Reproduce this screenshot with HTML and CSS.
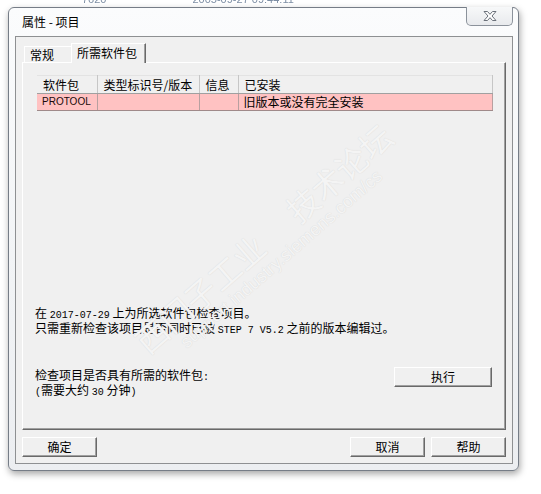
FILE: index.html
```html
<!DOCTYPE html>
<html>
<head>
<meta charset="utf-8">
<link rel="stylesheet" href="styles.css">
</head>
<body>
<div class="bgrow"><div class="bgline"><span class="bg1">7620</span><span class="bg2">2005-09-27 09:44:11</span></div></div>
<div class="window">
  <div class="titlebar">
    <span class="title">属性 - 项目</span>
    <div class="close">
      <svg width="18" height="12" viewBox="0 0 18 12">
        <path d="M3 1.5 H6.5 L9 4.3 L11.5 1.5 H15 L11 6 L15 10.5 H11.5 L9 7.7 L6.5 10.5 H3 L7 6 Z" fill="#ffffff" stroke="#6b717a" stroke-width="1" stroke-linejoin="round"/>
      </svg>
    </div>
  </div>
  <div class="client">
    <div class="tabs">
      <div class="tab">常规</div>
      <div class="tab active">所需软件包</div>
    </div>
    <div class="panel">
      <table class="grid">
        <colgroup><col class="c1"><col class="c2"><col class="c3"><col class="c4"></colgroup>
        <thead>
          <tr><th>软件包</th><th>类型标识号/版本</th><th>信息</th><th>已安装</th></tr>
        </thead>
        <tbody>
          <tr><td class="pkg">PROTOOL</td><td></td><td></td><td>旧版本或没有完全安装</td></tr>
        </tbody>
      </table>
      <div class="info">
        <div>在 <span class="lat">2017-07-29</span> 上为所选软件包检查项目。</div>
        <div>只需重新检查该项目是否同时已被 <span class="lat">STEP 7 V5.2</span> 之前的版本编辑过。</div>
      </div>
      <div class="check">
        <div class="checktext">
          <div>检查项目是否具有所需的软件包<span class="lat">:</span></div>
          <div><span class="lat">(</span>需要大约 <span class="lat">30</span> 分钟<span class="lat">)</span></div>
        </div>
        <div class="btn run">执行</div>
      </div>
    </div>
    <div class="footer">
      <div class="btn">确定</div>
      <div class="btn push">取消</div>
      <div class="btn">帮助</div>
    </div>
  </div>
</div>
<div class="watermark">
  <div class="wm1"><span>西门子工业</span><span class="wmgap">技术论坛</span></div>
  <div class="wm2">support.industry.siemens.com/cs</div>
</div>
</body>
</html>
```
FILE: styles.css
```css
html, body {
  margin: 0;
  padding: 0;
}
body {
  width: 541px;
  height: 494px;
  background: #ffffff;
  position: relative;
  overflow: hidden;
  font-family: "Noto Sans CJK SC", "Liberation Sans", sans-serif;
  font-size: 12px;
  color: #000;
}
.bgrow {
  height: 7px;
  overflow: hidden;
}
.bgline {
  margin-top: -7px;
  height: 12px;
  line-height: 12px;
  font-family: "Liberation Sans", sans-serif;
  font-size: 11px;
  color: #7d8ea4;
  filter: blur(0.6px);
  white-space: nowrap;
}
.bg1 { margin-left: 82px; }
.bg2 { margin-left: 86px; }

.window {
  margin-left: 8px;
  width: 511px;
  height: 464px;
  box-sizing: border-box;
  border: 1px solid #767d87;
  border-radius: 6px;
  background: linear-gradient(#fbfcfd, #f1f3f5 60%, #eceef1);
  padding: 0 5px 6px 6px;
  box-shadow: 1px 3px 7px rgba(0, 0, 0, 0.35);
}
.titlebar {
  height: 28px;
  display: flex;
  align-items: flex-start;
}
.title {
  padding-left: 7px;
  padding-top: 6px;
  line-height: 16px;
  font-size: 12px;
}
.close {
  margin-left: auto;
  margin-top: -1px;
  width: 47px;
  height: 19px;
  box-sizing: border-box;
  border: 1px solid #8b929b;
  border-top: none;
  border-radius: 0 0 5px 5px;
  background: linear-gradient(#f7f8f9, #e8eaed);
  display: flex;
  align-items: center;
  justify-content: center;
}
.close svg { display: block; }

.client {
  height: 428px;
  box-sizing: border-box;
  border: 1px solid #8e9092;
  background: #f0f0f0;
  padding: 6px 6px 0 6px;
}
.tabs {
  height: 19px;
  display: flex;
  align-items: flex-end;
  padding-left: 2px;
}
.tab {
  height: 16px;
  width: 49px;
  box-sizing: border-box;
  padding-left: 5px;
  border-top: 1px solid #ffffff;
  border-left: 1px solid #ffffff;
  border-right: 1px solid #a0a0a0;
  line-height: 15px;
  white-space: nowrap;
}
.tab.active {
  position: relative;
  z-index: 1;
  width: 75px;
  height: 20px;
  margin-left: -2px;
  margin-bottom: -1px;
  background: #f0f0f0;
  border-right: 1px solid #696969;
  box-shadow: inset -1px 0 0 #a0a0a0;
  line-height: 18px;
}

.panel {
  height: 368px;
  box-sizing: border-box;
  border-top: 1px solid #ffffff;
  border-left: 1px solid #ffffff;
  border-right: 1px solid #696969;
  border-bottom: 1px solid #696969;
  box-shadow: inset -1px -1px 0 #a0a0a0;
  padding: 12px 13px 36px 12px;
  display: flex;
  flex-direction: column;
}
.grid {
  margin-left: 2px;
  width: 455px;
  table-layout: fixed;
  border-collapse: collapse;
  border-top: 1px solid #e3e3e3;
  border-right: 1px solid #8a8a8a;
}
.c1 { width: 60px; }
.c2 { width: 102px; }
.c3 { width: 39px; }
.c4 { width: 254px; }
.grid th {
  height: 17px;
  padding: 0 0 0 6px;
  text-align: left;
  font-weight: normal;
  line-height: 17px;
  background: #f0f0f0;
  border-right: 1px solid #c6c6c6;
  border-bottom: 1px solid #a0a0a0;
  white-space: nowrap;
  overflow: hidden;
}
.grid td {
  height: 16px;
  padding: 0 0 0 5px;
  line-height: 16px;
  background: #ffc2c2;
  border-right: 1px solid #b8a0a0;
  border-bottom: 1px solid #a08a8a;
  white-space: nowrap;
  overflow: hidden;
}
.grid td.pkg {
  font-family: "Liberation Sans", sans-serif;
  font-size: 10px;
  padding-left: 5px;
  color: #1a0a0a;
}
.lat {
  font-family: "Liberation Mono", monospace;
  font-size: 10px;
}
.info {
  margin-top: auto;
  line-height: 12px;
  margin-bottom: 30px;
  white-space: nowrap;
}
.check {
  display: flex;
  justify-content: space-between;
  align-items: flex-start;
  height: 26px;
}
.checktext {
  padding-top: 2px;
  line-height: 12px;
  white-space: nowrap;
}
.btn {
  width: 75px;
  height: 20px;
  box-sizing: border-box;
  border-top: 1px solid #ffffff;
  border-left: 1px solid #ffffff;
  border-right: 1px solid #696969;
  border-bottom: 1px solid #696969;
  box-shadow: inset -1px -1px 0 #a0a0a0;
  background: #f0f0f0;
  text-align: center;
  line-height: 18px;
}
.btn.run {
  width: 98px;
}
.footer {
  margin-top: 7px;
  display: flex;
  gap: 6px;
}
.footer .push {
  margin-left: auto;
}

.watermark {
  position: absolute;
  left: 270px;
  top: 246px;
  transform: translate(-50%, -50%) rotate(-41deg);
  text-align: center;
  white-space: nowrap;
  pointer-events: none;
  color: #f4f4f4;
  text-shadow: 0 0 1px #d2d2d2;
}
.wm1 {
  font-size: 32px;
  line-height: 34px;
}
.wmgap {
  margin-left: 40px;
}
.wm2 {
  font-family: "Liberation Sans", sans-serif;
  font-size: 18px;
  line-height: 22px;
}
```
